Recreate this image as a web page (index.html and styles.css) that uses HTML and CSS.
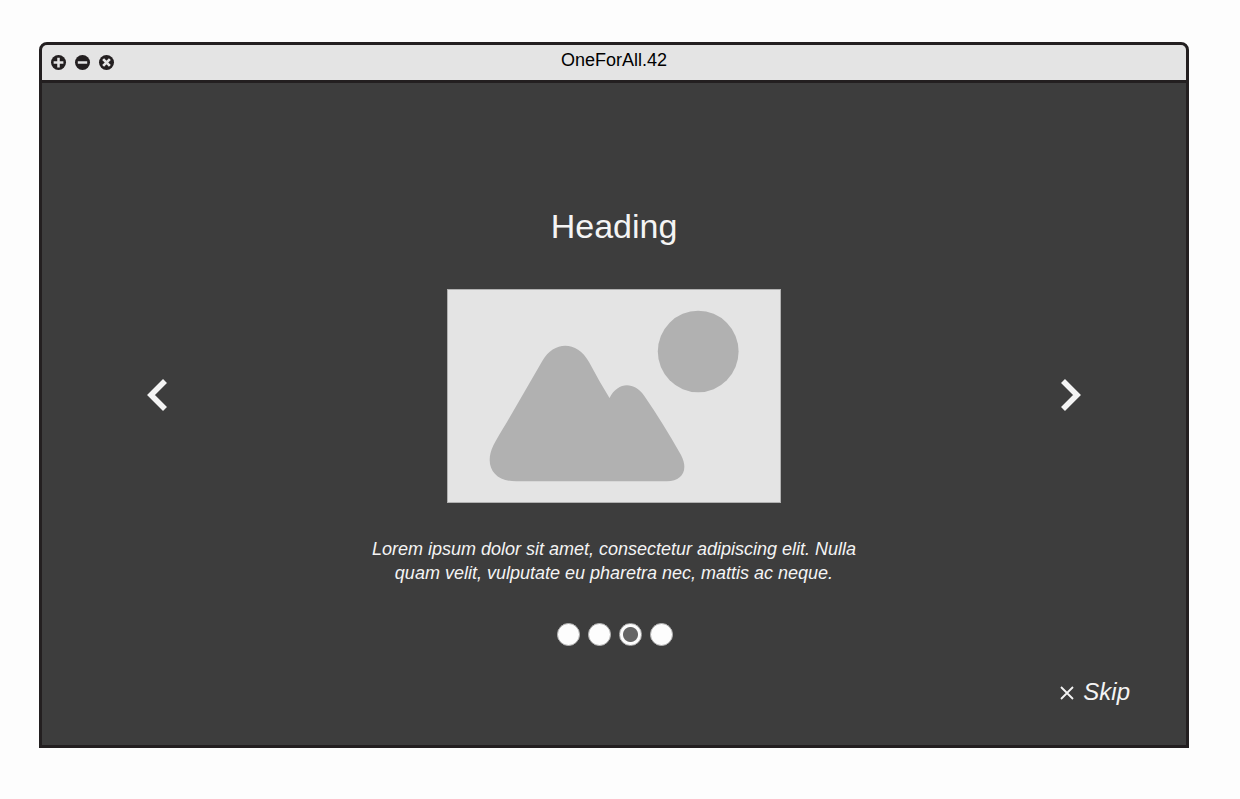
FILE: index.html
```html
<!DOCTYPE html>
<html lang="en">
<head>
<meta charset="utf-8">
<title>OneForAll.42</title>
<link rel="stylesheet" href="styles.css">
</head>
<body>
<div class="window">
  <header class="titlebar">
    <div class="controls">
      <button class="control" type="button" aria-label="Maximize">
        <svg viewBox="0 0 16 16"><circle cx="8" cy="8" r="8" fill="#231f20"/><path d="M8 2.800v10.400M2.800 8h10.400" stroke="#e4e4e4" stroke-width="2.700"/></svg>
      </button>
      <button class="control" type="button" aria-label="Minimize">
        <svg viewBox="0 0 16 16"><circle cx="8" cy="8" r="8" fill="#231f20"/><path d="M3 8h10" stroke="#e4e4e4" stroke-width="2.700"/></svg>
      </button>
      <button class="control" type="button" aria-label="Close">
        <svg viewBox="0 0 16 16"><circle cx="8" cy="8" r="8" fill="#231f20"/><path d="M4.400 4.400l7.200 7.200M11.600 4.400l-7.200 7.200" stroke="#e4e4e4" stroke-width="2.900"/></svg>
      </button>
    </div>
    <span class="title">OneForAll.42</span>
  </header>
  <main class="content">
    <section class="carousel">
      <h1 class="heading">Heading</h1>
      <button class="arrow arrow-prev" type="button" aria-label="Previous">
        <svg viewBox="0 0 21 34"><path d="M18 2L4 16l14 14" fill="none" stroke="#f4f4f4" stroke-width="5.6"/></svg>
      </button>
      <svg class="picture" viewBox="0 0 334 214" role="img" aria-label="Image placeholder">
        <rect x=".5" y=".5" width="333" height="213" fill="#e4e4e4" stroke="#b1b1b1"/>
        <ellipse cx="251.2" cy="62.500" rx="40.400" ry="40.800" fill="#b1b1b1"/>
        <path d="M95.300 72C107 51.500 130 51.500 142 73Q152 92 162.500 109C171 92.500 187 92.500 197 106.500Q216 134 234 166C242 181 235 192.300 220 192.300H69C46 192.300 37 176 46.300 156.500Q51 147.500 59.700 133.500Z" fill="#b1b1b1"/>
      </svg>
      <button class="arrow arrow-next" type="button" aria-label="Next">
        <svg viewBox="0 0 21 34"><path d="M3 2l14 14L3 30" fill="none" stroke="#f4f4f4" stroke-width="5.6"/></svg>
      </button>
      <p class="caption">Lorem ipsum dolor sit amet, consectetur adipiscing elit. Nulla quam velit, vulputate eu pharetra nec, mattis ac neque.</p>
    </section>
    <nav class="dots" aria-label="Slides">
      <button class="dot" type="button" aria-label="Slide 1"></button>
      <button class="dot" type="button" aria-label="Slide 2"></button>
      <button class="dot dot-current" type="button" aria-label="Slide 3" aria-current="true"></button>
      <button class="dot" type="button" aria-label="Slide 4"></button>
    </nav>
    <button class="skip" type="button">
      <svg class="skip-icon" viewBox="0 0 14 14"><path d="M1 2l12 12M13 2L1 14" stroke="#f4f4f4" stroke-width="1.8"/></svg>
      Skip
    </button>
  </main>
</div>
</body>
</html>
```
FILE: styles.css
```css
* {
  box-sizing: border-box;
}

body {
  margin: 0;
  padding: 42px 51px 51px 39px;
  min-height: 100vh;
  display: flex;
  background: #fdfdfd;
  font-family: "Liberation Sans", Arial, sans-serif;
}

button {
  margin: 0;
  padding: 0;
  border: 0;
  background: none;
  color: inherit;
  font: inherit;
  cursor: pointer;
}

svg {
  display: block;
  overflow: visible;
}

.window {
  flex: 1;
  display: flex;
  flex-direction: column;
  border: 3px solid #231f20;
  border-radius: 8px 8px 0 0;
  background: #3d3d3d;
  overflow: hidden;
}

.titlebar {
  display: grid;
  grid-template-columns: 1fr auto 1fr;
  height: 38px;
  padding: 0 9px;
  border-bottom: 3px solid #231f20;
  background: #e4e4e4;
}

.controls {
  display: flex;
  align-items: center;
  gap: 9px;
  height: 34px;
}

.control {
  width: 15px;
  height: 15px;
}

.title {
  color: #000;
  font-size: 18px;
  line-height: 30px;
}

.content {
  flex: 1;
  display: flex;
  flex-direction: column;
  padding: 123px 56px 39px;
  color: #f4f4f4;
}

.carousel {
  display: grid;
  grid-template-columns: 21px 1fr 21px;
  justify-items: center;
  align-items: center;
  padding: 0 49px;
}

.heading {
  grid-column: 1 / -1;
  margin: 0 0 43px;
  font-size: 34px;
  font-weight: 400;
  line-height: 40px;
}

.arrow {
  width: 21px;
  height: 34px;
}

.picture {
  width: 334px;
  height: 214px;
}

.caption {
  grid-column: 1 / -1;
  max-width: 500px;
  margin: 34px 0 0;
  font-size: 18px;
  font-style: italic;
  line-height: 24px;
  text-align: center;
}

.dots {
  display: flex;
  justify-content: center;
  gap: 8px;
  margin-top: 38px;
  padding-left: 2px;
}

.dot {
  width: 23px;
  height: 23px;
  border: 1px solid #b1b1b1;
  border-radius: 50%;
  background: #fdfdfd;
}

.dot-current {
  background: radial-gradient(circle, #666 7px, #fdfdfd 8px);
}

.skip {
  align-self: flex-end;
  display: flex;
  align-items: center;
  gap: 9px;
  margin-top: 32px;
  font-size: 24px;
  font-style: italic;
  line-height: 28px;
}

.skip-icon {
  width: 14px;
  height: 14px;
}
```
